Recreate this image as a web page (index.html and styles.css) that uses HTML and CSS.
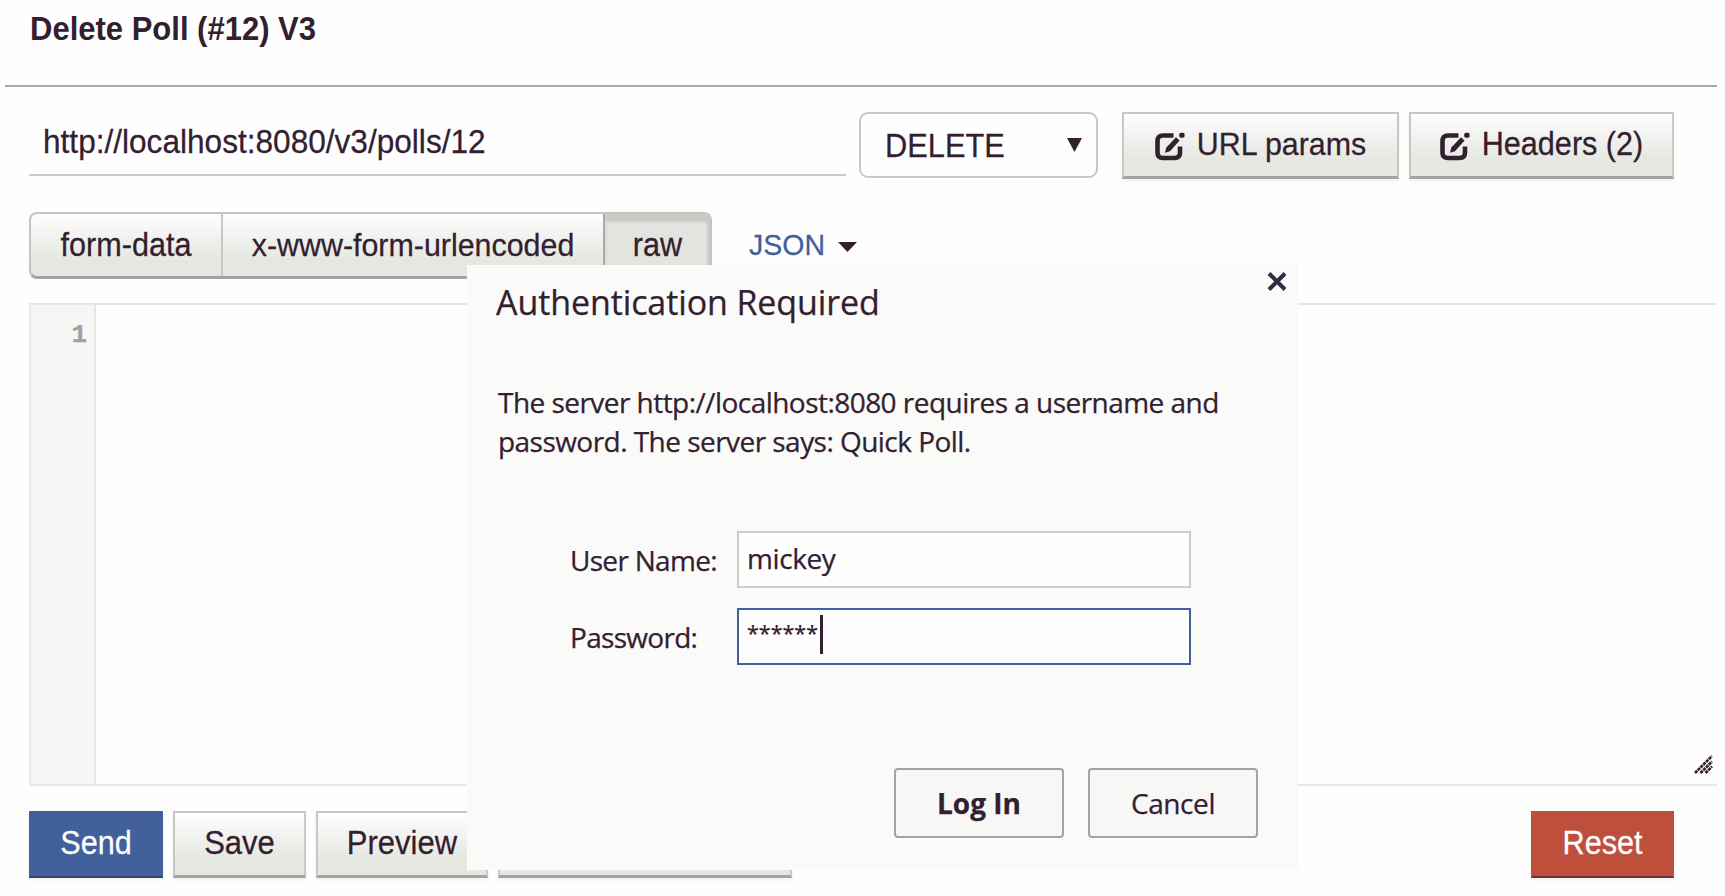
FILE: index.html
```html
<!DOCTYPE html>
<html lang="en">
<head>
<meta charset="utf-8">
<title>Delete Poll (#12) V3</title>
<link rel="stylesheet" href="styles.css">
</head>
<body>
<header class="title-bar"><h1 class="title tall">Delete Poll (#12) V3</h1></header>
<main class="request">
  <div class="url-row">
    <div class="url-field"><span class="tall">http://localhost:8080/v3/polls/12</span></div>
    <div class="method"><span class="tall">DELETE</span><svg width="15" height="14" viewBox="0 0 15 14"><path d="M0 0H15L7.5 14Z" fill="#33202f"/></svg></div>
    <button class="btn params"><svg class="edit" viewBox="0 0 30 29"><path d="M18.500 3.500H8Q2.500 3.500 2.500 9V20.500Q2.500 26 8 26H19.500Q25 26 25 20.500V14.500" fill="none" stroke="#33202f" stroke-width="4.600"/><path d="M10 20.800L11.300 15.500L21 5.300L24.600 8.500L15 19.200Z" fill="#33202f"/><rect x="24.200" y="0.800" width="5.400" height="5" rx="1.800" fill="#33202f"/></svg><span class="tall">URL params</span></button>
    <button class="btn headers"><svg class="edit" viewBox="0 0 30 29"><path d="M18.500 3.500H8Q2.500 3.500 2.500 9V20.500Q2.500 26 8 26H19.500Q25 26 25 20.500V14.500" fill="none" stroke="#33202f" stroke-width="4.600"/><path d="M10 20.800L11.300 15.500L21 5.300L24.600 8.500L15 19.200Z" fill="#33202f"/><rect x="24.200" y="0.800" width="5.400" height="5" rx="1.800" fill="#33202f"/></svg><span class="tall">Headers (2)</span></button>
  </div>
  <div class="body-row">
    <div class="tabs">
      <button class="tab form"><span class="tall">form-data</span></button>
      <button class="tab encoded"><span class="tall">x-www-form-urlencoded</span></button>
      <button class="tab raw"><span class="tall">raw</span></button>
    </div>
    <div class="format"><span class="tall">JSON</span><svg width="19" height="10" viewBox="0 0 19 10"><path d="M0 0H19L9.500 10Z" fill="#33202f"/></svg></div>
  </div>
  <div class="editor">
    <div class="gutter">1</div>
    <svg class="resizer" width="19" height="19" viewBox="0 0 19 19"><path d="M1 18L18 1M6.500 18L18 6.500M11.500 18L18 11.500" stroke="#33202f" stroke-width="2.600" stroke-dasharray="3.200 0.700" fill="none"/></svg>
  </div>
  <div class="actions">
    <button class="btn send"><span class="tall">Send</span></button>
    <button class="btn save"><span class="tall">Save</span></button>
    <button class="btn preview"><span class="tall">Preview</span></button>
    <button class="btn collection"></button>
    <button class="btn reset"><span class="tall">Reset</span></button>
  </div>
</main>
<section class="dialog">
  <svg class="close" width="20" height="19" viewBox="0 0 20 19"><path d="M2 1.500L18 17.500M18 1.500L2 17.500" stroke="#332a45" stroke-width="4"/></svg>
  <h2 class="dialog-title">Authentication Required</h2>
  <p class="message">The server http://localhost:8080 requires a username and<br>password. The server says: Quick Poll.</p>
  <div class="fields">
    <div class="field"><span class="label">User Name:</span><div class="input"><span class="value">mickey</span></div></div>
    <div class="field"><span class="label">Password:</span><div class="input focused"><span class="stars">******</span><i class="cursor"></i></div></div>
  </div>
  <div class="dialog-actions">
    <button class="dlg-btn login">Log In</button>
    <button class="dlg-btn cancel">Cancel</button>
  </div>
</section>
</body>
</html>
```
FILE: styles.css
```css
* { box-sizing: border-box; }
body {
  margin: 0;
  width: 1725px;
  height: 896px;
  overflow: hidden;
  position: relative;
  background: #fefefe;
  color: #33202f;
  font: 30.6px/36px "Liberation Sans", Arial, sans-serif;
  -webkit-text-stroke: 0.25px;
}
button { font: inherit; color: inherit; margin: 0; padding: 0; }
svg { display: block; flex: none; }
h1, h2, p { margin: 0; font-size: inherit; font-weight: inherit; }
.tall { display: block; transform: scaleY(1.06); white-space: nowrap; }

.title-bar {
  height: 87px;
  margin: 0 8px 0 5px;
  padding: 11px 0 0 25px;
  border-bottom: 2px solid #a6abac;
}
.title { font-weight: bold; font-size: 31px; -webkit-text-stroke: 0; }
.request { padding: 25px 8px 0 29px; }

.url-row { display: flex; height: 66px; }
.url-field {
  width: 817px;
  height: 64px;
  padding: 11px 0 0 14px;
  border-bottom: 2px solid #cbccc6;
  font-size: 31.6px;
}
.method {
  width: 239px;
  margin-left: 13px;
  padding: 0 14px 0 24px;
  border: 2px solid #c6c8c4;
  border-radius: 9px;
  display: flex;
  align-items: center;
  justify-content: space-between;
  font-size: 30.8px;
}
.method .tall { padding-top: 1px; }
.btn {
  display: flex;
  justify-content: center;
  padding-top: 12px;
  height: 67px;
  border: 2px solid #c6c8c4;
  border-bottom: 3px solid #a0a3a9;
  background: linear-gradient(#fefefe, #e5e7e1 75%);
  box-shadow: 0 2px 3px #f0f0ec;
}
.params { width: 277px; margin-left: 24px; font-size: 30.4px; }
.headers { width: 265px; margin-left: 10px; }
.edit { width: 30px; height: 29px; margin: 6px 12px 0 0; }

.body-row { display: flex; margin-top: 34px; height: 67px; }
.tabs {
  display: flex;
  width: 683px;
  border: 2px solid #c3c5c1;
  border-bottom: 3px solid #a0a3a9;
  border-radius: 8px;
  overflow: hidden;
  background: linear-gradient(#fefefe, #e5e7e1 75%);
}
.tab { border: 0; background: none; padding-bottom: 2px; }
.tab .tall { text-align: center; }
.form { width: 190px; }
.encoded { width: 382px; border-left: 2px solid #c6c8c4; font-size: 30.4px; }
.raw {
  flex: 1;
  border-left: 2px solid #a9aaa9;
  background: #e2e4df;
  box-shadow: inset 0 8px 3px #cacac7, inset -3px 0 2px #cacac7;
}
.format {
  display: flex;
  align-items: center;
  gap: 13px;
  margin-left: 37px;
  padding-bottom: 3px;
  color: #41609c;
  font-size: 28.5px;
}
.format svg { margin-top: 5px; }

.editor {
  display: flex;
  position: relative;
  height: 483px;
  margin-top: 24px;
  border: 2px solid #e7e8e4;
  border-right: 0;
}
.gutter {
  width: 65px;
  padding: 12px 7px 0 0;
  border-right: 2px solid #e5e6e2;
  background: #f6f6f4;
  color: #9ca0a3;
  text-align: right;
  font: bold 26px/36px "Liberation Mono", monospace;
}
.resizer { position: absolute; right: 4px; bottom: 10px; }

.actions { display: flex; margin-top: 25px; padding-right: 43px; }
.send { width: 134px; background: #41609c; border-color: #41609c; border-bottom-color: #36416d; color: #fefefe; }
.save { width: 133px; margin-left: 10px; font-size: 31px; padding-top: 13px; }
.preview { width: 172px; margin-left: 10px; font-size: 31px; padding-top: 13px; }
.collection { width: 294px; margin-left: 10px; }
.reset { width: 143px; margin-left: auto; background: #bd4f3c; border-color: #bd4f3c; border-bottom-color: #6d3032; color: #fefefe; }
.send, .reset { border-bottom-width: 2px; }

.dialog {
  position: absolute;
  left: 467px;
  top: 265px;
  width: 831px;
  height: 605px;
  padding: 15px 40px 0 29px;
  background: #fafaf9;
  font: 28px/39px "Open Sans", "Noto Sans", sans-serif;
}
.close { position: absolute; right: 11px; top: 7px; }
.dialog-title { font-size: 34px; line-height: 44px; letter-spacing: -0.1px; white-space: nowrap; }
.message { margin: 59px 0 0 2px; white-space: nowrap; letter-spacing: -0.54px; }
.fields { display: flex; flex-direction: column; gap: 20px; margin: 70px 0 0 74px; }
.field { display: flex; height: 57px; align-items: center; }
.label { width: 167px; white-space: nowrap; letter-spacing: -0.7px; padding-top: 2px; }
.input {
  width: 454px;
  height: 57px;
  padding: 6px 8px;
  display: flex;
  border: 2px solid #cccdc7;
  background: #fefefe;
}
.value { letter-spacing: -0.4px; }
.focused { padding-top: 5px; border-color: #41609c; }
.stars { width: 73px; font-size: 21.5px; margin-top: -2px; }
.cursor { width: 3px; height: 39px; background: #33202f; }
.dialog-actions { display: flex; justify-content: flex-end; gap: 24px; margin-top: 103px; }
.dlg-btn { width: 170px; height: 70px; border: 2px solid #a0a3a8; border-radius: 4px; background: #f7f7f5; }
.login { font-weight: bold; }
.cancel { letter-spacing: -0.4px; }
```
